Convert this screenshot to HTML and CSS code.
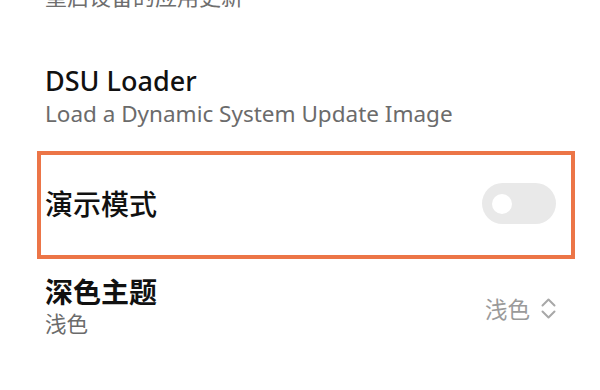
FILE: index.html
```html
<!DOCTYPE html>
<html lang="zh-CN">
<head>
<meta charset="utf-8">
<title>设置</title>
<link rel="stylesheet" href="styles.css">
</head>
<body>
<div class="list">
  <div class="cut">重启设备的应用更新</div>

  <div class="item dsu">
    <div class="title latin">DSU Loader</div>
    <div class="sub latin">Load a Dynamic System Update Image</div>
  </div>

  <div class="item highlight">
    <div class="title cjk">演示模式</div>
    <div class="toggle"><span class="knob"></span></div>
  </div>

  <div class="item theme">
    <div class="texts">
      <div class="title cjk bold">深色主题</div>
      <div class="sub cjk">浅色</div>
    </div>
    <div class="value">
      <span>浅色</span>
      <svg class="chev" width="15" height="25" viewBox="0 0 15 25" fill="none" stroke="#a8a8a8" stroke-width="2" stroke-linecap="round" stroke-linejoin="round">
        <path d="M1.5 9.5 L7.5 3.5 L13.5 9.5"/>
        <path d="M1.5 15.5 L7.5 21.5 L13.5 15.5"/>
      </svg>
    </div>
  </div>
</div>
</body>
</html>
```

FILE: styles.css
```css
html, body {
  margin: 0;
  padding: 0;
  background: #ffffff;
}

body {
  width: 600px;
  height: 390px;
  overflow: hidden;
  font-family: "Noto Sans", "Noto Sans CJK SC", sans-serif;
  color: #111111;
}

.list {
  padding: 0 44px 0 45px;
}

.cut {
  margin-top: -17px;
  font-size: 22px;
  line-height: 26px;
  color: #6e6e6e;
}

.dsu {
  margin-top: 55px;
}

.title {
  font-size: 27px;
  line-height: 34px;
  font-weight: 500;
  color: #111111;
}

.title.cjk {
  font-size: 28px;
  font-weight: 500;
}

.title.bold {
  font-weight: 700;
  line-height: 33px;
}

.sub {
  font-size: 22.5px;
  line-height: 30px;
  color: #6b6b6b;
}

.sub.latin {
  margin-top: 1px;
}

.sub.cjk {
  font-size: 21.5px;
}

.highlight {
  margin: 22px -19px 0 -8px;
  height: 97px;
  border: 4px solid #ec7547;
  padding: 0 15px 3px 4px;
  display: flex;
  align-items: center;
  justify-content: space-between;
}

.toggle {
  width: 74px;
  height: 41px;
  border-radius: 21px;
  background: #e9e9e9;
  display: flex;
  align-items: center;
  padding-left: 10px;
  box-sizing: border-box;
}

.knob {
  width: 20px;
  height: 20px;
  border-radius: 50%;
  background: #ffffff;
}

.theme {
  margin-top: 17px;
  display: flex;
  align-items: center;
  justify-content: space-between;
}

.value {
  display: flex;
  align-items: center;
  gap: 11px;
  font-size: 22.5px;
  color: #9a9a9a;
  padding-top: 2px;
}

.chev {
  display: block;
}
```
